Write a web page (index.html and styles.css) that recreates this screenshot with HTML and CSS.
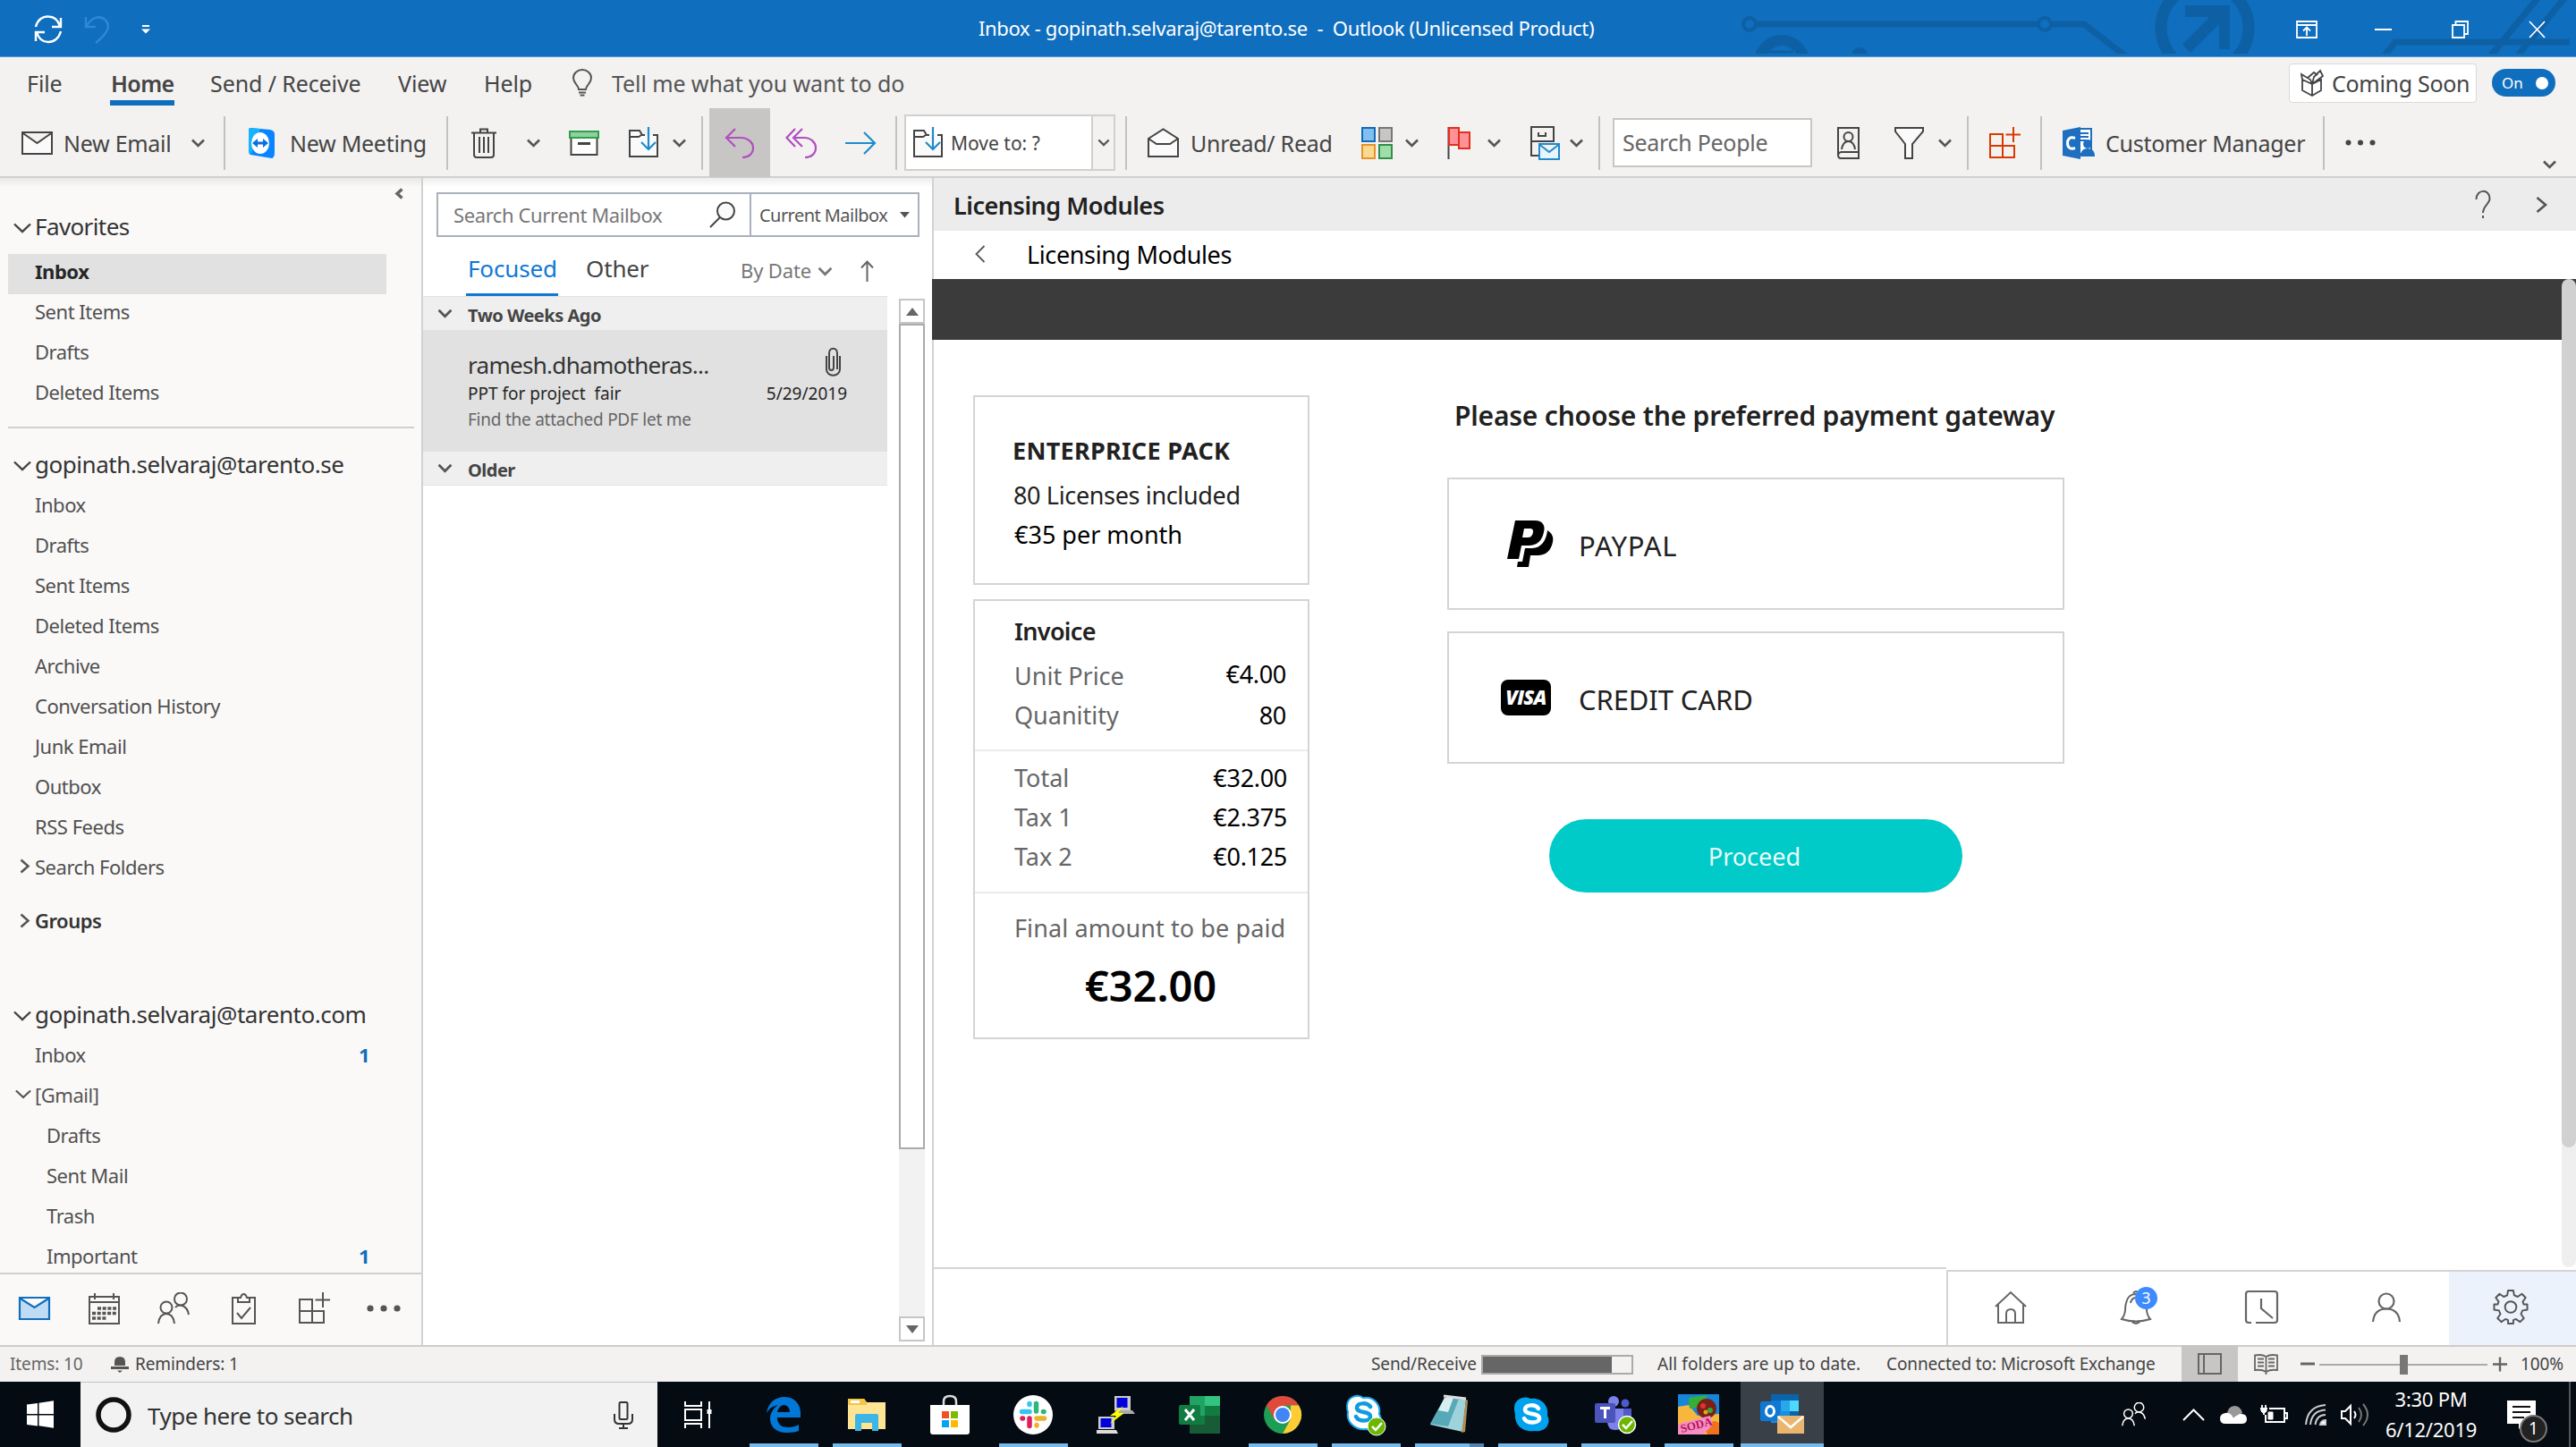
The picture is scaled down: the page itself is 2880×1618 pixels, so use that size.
FILE: index.html
```html
<!DOCTYPE html>
<html lang="en">
<head>
<meta charset="utf-8">
<title>Inbox - Outlook</title>
<link rel="stylesheet" href="styles.css">
</head>
<body>
<svg class="defs" width="0" height="0">
  <symbol id="chev" viewBox="0 0 16 10"><path d="M1.500 1.500 8 8l6.500-6.500" fill="none" stroke="currentColor" stroke-width="2.600"/></symbol>
  <symbol id="caret" viewBox="0 0 20 12"><path d="M1 1.500 10 10l9-8.500" fill="none" stroke="currentColor" stroke-width="2.400"/></symbol>
  <symbol id="moveto" viewBox="0 0 35 36"><path d="M2 4h11l3 5h17v24H2z" fill="#fafafa"/><path d="M19 9h-3l-3-5H2v29h31V9h-5M2 11h10l3-2" fill="none" stroke="#444" stroke-width="2"/><path d="M23 0v25M15 17l8 8 8-8" fill="none" stroke="#1e8bcd" stroke-width="2.200"/></symbol>
  <symbol id="addin" viewBox="0 0 36 36"><path d="M2 8h14v26H2zM2 21h27v13H2M16 21v13M28 0v17M19.500 8.500H36" fill="none" stroke="currentColor" stroke-width="2"/></symbol>
  <symbol id="people" viewBox="0 0 36 36"><g fill="none" stroke="currentColor" stroke-width="2"><circle cx="10" cy="17" r="6.500"/><path d="M1 35c1-8 5-11 9-11s8 3 9 11"/><circle cx="26" cy="7.500" r="7"/><path d="M20 17c3-4 13-4 15 8"/></g></symbol>
</svg>

<header class="titlebar">
  <svg class="circuit" width="980" height="60" viewBox="1900 0 980 60" fill="none" stroke="#0e60a4">
    <circle cx="1956" cy="27" r="7" stroke-width="4"/><path d="M1964 27h314" stroke-width="7"/><circle cx="2286" cy="27" r="7" stroke-width="4"/><path d="M2294 27h36l48 37" stroke-width="7"/>
    <circle cx="1992" cy="70" r="25" stroke-width="12"/><path d="M1975 58h30" stroke-width="3"/><path d="M2070 62a9 9 0 0 1 18 0z" fill="#0e60a4" stroke="none"/><path d="M2088 61h170" stroke-width="2"/>
    <circle cx="2465" cy="31" r="49" stroke-width="13"/><path d="M2443 6h50v49h-12V27l-32 32-9-9 30-31h-27z" fill="#0e60a4" stroke="none"/>
    <path d="M2666 62l12-15h195" stroke-width="7"/><path d="M2785 62l52-64M2815 62l52-64" stroke-width="7"/>
  </svg>
  <svg width="32" height="32" viewBox="0 0 32 32" fill="none" stroke="#fff" stroke-width="2.400"><path d="M2 13C4 5 10 1 16 1.500c6 0 11 4 13 11M30 3v10H20M30 18c-2 8-8 12-14 12-6 0-11-4-13-11M2 29V19h10"/></svg>
  <svg width="30" height="32" viewBox="0 0 30 32" fill="none" stroke="#2f87d8" stroke-width="2.400"><path d="M2 2v11h11M2 13C8 3 16 0 22 4c8 6 7 14-9 27"/></svg>
  <svg width="10" height="10" viewBox="0 0 10 10" fill="#fff"><path d="M1 0h8v2H1zM0 4.500h10L5 9.500z"/></svg>
  <h1>Inbox - gopinath.selvaraj@tarento.se&nbsp; -&nbsp; Outlook (Unlicensed Product)</h1>
  <svg width="24" height="20" viewBox="0 0 24 20" fill="none" stroke="#fff" stroke-width="1.800"><path d="M1 1h22v18H1zM1 5h22M12 17V8M8 11.500l4-4 4 4"/></svg>
  <svg width="19" height="20" viewBox="0 0 19 20"><path d="M0 10h19" stroke="#fff" stroke-width="2"/></svg>
  <svg width="19" height="20" viewBox="0 0 19 20" fill="none" stroke="#fff" stroke-width="1.800"><path d="M1 5h13v14H1zM4.500 5V1H18v14h-4"/></svg>
  <svg width="19" height="20" viewBox="0 0 19 20"><path d="M1 1l17 18M18 1 1 19" stroke="#fff" stroke-width="1.800"/></svg>
</header>

<section class="ribbon">
  <nav class="tabs">
    <span>File</span><span class="tab-on">Home</span><span>Send / Receive</span><span>View</span><span>Help</span>
    <svg width="24" height="31" viewBox="0 0 24 31" fill="none" stroke="#555" stroke-width="2"><path d="M8 23c0-5-6-6-6-13a10 9 0 0 1 20 0c0 7-6 8-6 13zM8 26.500h8M9.500 29.500h5"/></svg>
    <span class="tell">Tell me what you want to do</span>
    <span class="soon"><svg width="26" height="30" viewBox="0 0 26 30" fill="none" stroke="#444" stroke-width="1.800"><path d="M2 11l11 5 10-5v12l-10 6-11-6zM13 16v13M2 11 1 5l10 6 2 5 2-8 7-7 3 6-12 9M8 9l7-6 4 3"/></svg>Coming Soon</span>
    <span class="toggle">On<i></i></span>
  </nav>
  <div class="toolbar">
    <svg width="35" height="26" viewBox="0 0 35 26" fill="#fafafa" stroke="#444" stroke-width="2"><path d="M1 1h33v24H1zM1 1.500 17.500 13 34 1.500"/></svg>
    <span>New Email</span>
    <svg class="ch" width="17" height="10"><use href="#chev"/></svg>
    <i class="sep"></i>
    <svg width="32" height="36" viewBox="0 0 32 36"><path d="M3 1 25 3q5 1 5 5v20q0 6-3 7L3 31q-2-1-2-4V4q0-3 2-3z" fill="#0a84ff"/><path d="M3 1 14 2 4 30q-3-1-3-4V4q0-3 2-3z" fill="#17b3ff"/><ellipse cx="14" cy="18" rx="10" ry="12" fill="#fff"/><path d="M5 18l6-5v3.500h6V13l6 5-6 5v-3.500h-6V23z" fill="#0a6fe0"/></svg>
    <span>New Meeting</span>
    <i class="sep"></i>
    <svg width="28" height="34" viewBox="0 0 28 34" fill="none" stroke="#444" stroke-width="2"><path d="M0 5.500h28M10 5V1.500h8V5M3 6v24q0 3 3 3h16q3 0 3-3V6M9 10v18M14 10v18M19 10v18"/></svg>
    <svg class="ch" width="17" height="10"><use href="#chev"/></svg>
    <svg width="34" height="28" viewBox="0 0 34 28"><path d="M2.500 8h29v19h-29z" fill="#fff" stroke="#444" stroke-width="2"/><path d="M1 1h32v7H1z" fill="#8fd19c" stroke="#2f9e4f" stroke-width="2"/><path d="M10 14.500h14" stroke="#444" stroke-width="3"/></svg>
    <svg width="35" height="36"><use href="#moveto"/></svg>
    <svg class="ch" width="17" height="10"><use href="#chev"/></svg>
    <i class="sep"></i>
    <span class="reply"><svg width="34" height="34" viewBox="0 0 34 34" fill="none" stroke="#b04fc0" stroke-width="2.200"><path d="M12 1 2 11l10 10M2 11h16c9 0 14 6 14 11 0 7-5 11-12 11"/></svg></span>
    <svg width="35" height="34" viewBox="0 0 35 34" fill="none" stroke="#b04fc0" stroke-width="2.200"><path d="M11 1 1.500 11 11 21M19 1 9 11l10 10M9 11h12c8 0 13 6 13 11 0 7-5 11-12 11"/></svg>
    <svg width="35" height="26" viewBox="0 0 35 26" fill="none" stroke="#1e8bcd" stroke-width="2.200"><path d="M0 13h33M21 1l12 12-12 12"/></svg>
    <i class="sep"></i>
    <span class="movebox"><svg width="35" height="36"><use href="#moveto"/></svg><b>Move to: ?</b><i><svg class="ch" width="14" height="9"><use href="#chev"/></svg></i></span>
    <i class="sep"></i>
    <svg width="35" height="34" viewBox="0 0 35 34" fill="#fafafa" stroke="#444" stroke-width="2"><path d="M1 12 17.500 1.500 34 12v20H1z"/><path d="M1 12l9 6h15l9-6" fill="none"/></svg>
    <span>Unread/ Read</span>
    <svg width="35" height="36" viewBox="0 0 35 36" stroke-width="2"><path d="M1 1h14v15H1z" fill="#83beec" stroke="#0f6cbd"/><path d="M20 1h14v15H20z" fill="#c8c6c4" stroke="#797775"/><path d="M1 20h14v15H1z" fill="#f8db8f" stroke="#e8912d"/><path d="M20 20h14v15H20z" fill="#a1ddaa" stroke="#309048"/></svg>
    <svg class="ch" width="17" height="10"><use href="#chev"/></svg>
    <svg width="27" height="36" viewBox="0 0 27 36"><path d="M1.500 0v36" stroke="#444" stroke-width="2"/><path d="M2 1h11v5h12v18H13v-4H2z" fill="#ff9199" stroke="#e0301e" stroke-width="2"/><path d="M13 6v14" stroke="#e0301e" stroke-width="2"/></svg>
    <svg class="ch" width="17" height="10"><use href="#chev"/></svg>
    <svg width="34" height="38" viewBox="0 0 34 38" fill="none" stroke="#444" stroke-width="2"><path d="M10 33H2V1h25v17M2 17h25M10 7v4h8V7"/><path d="M11 20h22v17H11zM11 20.500 22 29l11-8.500" fill="#e8f4fd" stroke="#1e8bcd"/></svg>
    <svg class="ch" width="17" height="10"><use href="#chev"/></svg>
    <i class="sep"></i>
    <span class="findbox">Search People</span>
    <svg width="27" height="36" viewBox="0 0 27 36" fill="none" stroke="#444" stroke-width="2"><path d="M2 1h23v34H5q-3 0-3-4zM2 31q1-3 4-3h19"/><circle cx="13.500" cy="11" r="5"/><path d="M6 25c1-6 4-9 7.500-9s6.500 3 7.500 9"/></svg>
    <svg width="33" height="36" viewBox="0 0 33 36" fill="#fafafa" stroke="#444" stroke-width="2"><path d="M1 1h31v4L20 19v16h-8V19L1 5z"/></svg>
    <svg class="ch" width="17" height="10"><use href="#chev"/></svg>
    <i class="sep"></i>
    <svg class="orange" width="36" height="36"><use href="#addin"/></svg>
    <i class="sep"></i>
    <svg width="36" height="36" viewBox="0 0 36 36"><path d="M18 2h14v28H18z" fill="#fff" stroke="#1e6fc0" stroke-width="2"/><path d="M20 7h9M20 11h9M20 15h6" stroke="#1e6fc0" stroke-width="2"/><path d="M0 4 20 0v36L0 32z" fill="#1e6fc0"/><path d="M14 12.500c-6-2-8.500 1-8.500 5.500s2.500 7.500 8.500 5.500" fill="none" stroke="#fff" stroke-width="3"/><circle cx="28" cy="19" r="5" fill="#1e6fc0"/><path d="M20 33c0-6 3-9 8-9s8 3 8 9z" fill="#1e6fc0"/></svg>
    <span>Customer Manager</span>
    <i class="sep"></i>
    <svg width="34" height="8" viewBox="0 0 34 8" fill="#444"><circle cx="3.500" cy="3.500" r="3"/><circle cx="17" cy="3.500" r="3"/><circle cx="30.500" cy="3.500" r="3"/></svg>
    <svg class="ch fold" width="17" height="10"><use href="#chev"/></svg>
  </div>
</section>

<main>
  <aside class="nav">
    <svg class="collapse" width="10" height="13" viewBox="0 0 10 13"><path d="M8.500 1.500 3 6.500l5.500 5" fill="none" stroke="#666" stroke-width="3.500"/></svg>
    <div class="tree">
      <div class="head fav"><svg width="20" height="12"><use href="#caret"/></svg>Favorites</div>
      <div class="row on">Inbox</div><div class="row">Sent Items</div><div class="row">Drafts</div><div class="row">Deleted Items</div>
      <hr>
      <div class="head"><svg width="20" height="12"><use href="#caret"/></svg>gopinath.selvaraj@tarento.se</div>
      <div class="row">Inbox</div><div class="row">Drafts</div><div class="row">Sent Items</div><div class="row">Deleted Items</div><div class="row">Archive</div><div class="row">Conversation History</div><div class="row">Junk Email</div><div class="row">Outbox</div><div class="row">RSS Feeds</div>
      <div class="row exp"><svg width="12" height="17" viewBox="0 0 12 17"><path d="M1.500 1.500 9.500 8.500l-8 7" fill="none" stroke="#555" stroke-width="2.500"/></svg>Search Folders</div>
      <div class="row exp groups"><svg width="12" height="17" viewBox="0 0 12 17"><path d="M1.500 1.500 9.500 8.500l-8 7" fill="none" stroke="#555" stroke-width="2.500"/></svg>Groups</div>
      <div class="head com"><svg width="20" height="12"><use href="#caret"/></svg>gopinath.selvaraj@tarento.com</div>
      <div class="row">Inbox<b>1</b></div>
      <div class="row gm"><svg width="18" height="11"><use href="#caret"/></svg>[Gmail]</div>
      <div class="row sub">Drafts</div><div class="row sub">Sent Mail</div><div class="row sub">Trash</div><div class="row sub">Important<b>1</b></div>
    </div>
    <div class="navbar">
      <svg width="35" height="26" viewBox="0 0 35 26" fill="#c0dcf5" stroke="#106ebe" stroke-width="2.200"><path d="M1 1h33v24H1zM1 1.500 17.500 12 34 1.500"/></svg>
      <svg width="35" height="35" viewBox="0 0 35 35" fill="none" stroke="#555" stroke-width="2"><path d="M1 4h33v30H1zM1 10h33M7 0v7M28 0v7"/><path d="M10 17h21M4 22.500h27M4 28h17" stroke-width="3.500" stroke-dasharray="4 1.700"/></svg>
      <svg class="grey" width="36" height="36"><use href="#people"/></svg>
      <svg width="27" height="35" viewBox="0 0 27 35" fill="none" stroke="#555" stroke-width="2"><path d="M8 5H1v29h25V5h-7M7 10V5h3q1-4 3.500-4T17 5h3v5zM6 22l5 6 10-12"/></svg>
      <svg class="grey" width="36" height="36"><use href="#addin"/></svg>
      <svg width="38" height="8" viewBox="0 0 38 8" fill="#555"><circle cx="4" cy="4" r="3.600"/><circle cx="19" cy="4" r="3.600"/><circle cx="34" cy="4" r="3.600"/></svg>
    </div>
  </aside>

  <section class="list">
    <div class="mailsearch">
      <span class="q">Search Current Mailbox</span>
      <svg width="30" height="30" viewBox="0 0 30 30" fill="#fafafa" stroke="#444" stroke-width="2"><circle cx="18.500" cy="11" r="9.500"/><path d="M12 18 1 29"/></svg>
      <span class="scope">Current Mailbox<svg width="11" height="7" viewBox="0 0 11 7"><path d="M0 0h11L5.500 6.500z" fill="#555"/></svg></span>
    </div>
    <div class="pivot">
      <span class="focused">Focused</span><span class="other">Other</span><span class="by">By Date</span>
      <svg class="ch" width="17" height="11"><use href="#chev"/></svg>
      <svg width="15" height="24" viewBox="0 0 15 24" fill="none" stroke="#666" stroke-width="2"><path d="M7.500 24V2M1 8.500 7.500 1.500 14 8.500"/></svg>
    </div>
    <div class="scroller">
      <div class="mails">
        <div class="group"><svg class="ch" width="17" height="11"><use href="#chev"/></svg>Two Weeks Ago</div>
        <article>
          <div class="from"><span>ramesh.dhamotheras...</span><svg width="18" height="32" viewBox="0 0 18 32" fill="none" stroke="#444" stroke-width="2"><path d="M1 9v15c0 9 15 9 15 0V9M13 24V6c0-7-9-7-9 0v16c0 4 5 4 5 0V9"/></svg></div>
          <div class="subj"><span>PPT for project&nbsp; fair</span><span>5/29/2019</span></div>
          <div class="prev">Find the attached PDF let me</div>
        </article>
        <div class="group last"><svg class="ch" width="17" height="11"><use href="#chev"/></svg>Older</div>
      </div>
      <div class="bar">
        <span class="btn"><svg width="14" height="9" viewBox="0 0 14 9"><path d="M7 0 14 9H0z" fill="#666"/></svg></span>
        <span class="thumb"></span>
        <span class="btn end"><svg width="14" height="9" viewBox="0 0 14 9"><path d="M0 0h14L7 9z" fill="#666"/></svg></span>
      </div>
    </div>
  </section>

  <section class="pane">
    <div class="phead"><h2>Licensing Modules</h2>
      <svg width="18" height="31" viewBox="0 0 18 31" fill="none" stroke="#555" stroke-width="2"><path d="M1.500 10c0-12 15-12 15-1 0 6-7.500 8-7.500 16M9 28v3"/></svg>
      <svg width="14" height="18" viewBox="0 0 14 18"><path d="M1.500 1 11 9l-9.500 8" fill="none" stroke="#555" stroke-width="2.600"/></svg>
    </div>
    <div class="crumb"><svg width="12" height="20" viewBox="0 0 12 20"><path d="M10.500 1 1.500 10l9 9" fill="none" stroke="#555" stroke-width="1.800"/></svg><span>Licensing Modules</span></div>
    <div class="view">
      <div class="content">
        <div class="dark"></div>
        <div class="cols">
          <div class="left">
            <div class="card pack"><h3>ENTERPRICE PACK</h3><p class="l1">80 Licenses included</p><p class="l2">€35 per month</p></div>
            <div class="card invoice">
              <div class="s1"><h4>Invoice</h4><p class="up"><span>Unit Price</span><b>€4.00</b></p><p class="qt"><span>Quanitity</span><b>80</b></p></div>
              <div class="s2"><p><span>Total</span><b>€32.00</b></p><p><span>Tax 1</span><b>€2.375</b></p><p><span>Tax 2</span><b>€0.125</b></p></div>
              <div class="s3"><p><span>Final amount to be paid</span></p><strong>€32.00</strong></div>
            </div>
          </div>
          <div class="right">
            <h3>Please choose the preferred payment gateway</h3>
            <div class="card pay"><svg width="56" height="54" viewBox="0 0 56 54"><path d="M15 1h22c9 0 12 6 10 13-2 10-8 15-17 15h-8l-3 15H6z"/><path d="M25 10h6c4 0 4 2 4 4-1 5-3 6-7 6h-5z" fill="#fff"/><path d="M51 12c6 4 7 8 6 13-2 10-8 15-17 15h-8l-2 13H17l1-6h5l3-15h8c10 0 16-9 17-20z"/></svg><span class="wide">PAYPAL</span></div>
            <div class="card pay"><span class="visa">VISA</span><span>CREDIT CARD</span></div>
            <button>Proceed</button>
          </div>
        </div>
      </div>
      <div class="vbar"><span></span></div>
    </div>
    <div class="pfoot">
      <div class="blank"></div>
      <div class="apps">
        <span><svg width="36" height="37" viewBox="0 0 36 37" fill="none" stroke="#666" stroke-width="2"><path d="M1 18 18 2l17 16M4 16v20h28V16M13 36V26q0-5 5-5t5 5v10"/></svg></span>
        <span class="bell"><svg width="34" height="38" viewBox="0 0 34 38" fill="none" stroke="#666" stroke-width="2"><path d="M1 32c6-7 3-12 5-18C7 8 11 4 17 4s10 4 11 10c2 6-1 11 5 18q-16 5-32 0zM12 34q5 6 10 0M14 3q3-4 6 0M11 14q1-5 5-6"/></svg><i>3</i></span>
        <span><svg width="37" height="37" viewBox="0 0 37 37" fill="none" stroke="#666" stroke-width="2.200"><path d="M7 36H4q-3 0-3-3V4q0-3 3-3h29q3 0 3 3v29q0 3-3 3H12M18 9v11l13 11"/></svg></span>
        <span><svg width="32" height="33" viewBox="0 0 32 33" fill="none" stroke="#666" stroke-width="2.200"><circle cx="16" cy="10" r="8.500"/><path d="M1 33C2 23 8 18.500 16 18.500S30 23 31 33"/></svg></span>
        <span class="gear"><svg width="40" height="39" viewBox="-20 -20 40 40" fill="none" stroke="#555" stroke-width="2" stroke-linejoin="round"><path d="M-3-19h6l1 5.500 4 1.700 4.800-3.300 4.300 4.300-3.300 4.800 1.700 4 3.500 0v6l-5.500 1-1.700 4 3.300 4.800-4.300 4.300L8-15.200l0 0" stroke="none"/><path d="M-3-19H3L4-13.500 8-11.800 12.800-15.100 17.100-10.800 13.800-6 15-3 19-3V3L13.500 4 11.800 8 15.100 12.800 10.800 17.100 6 13.800 3 15 3 19H-3L-3 15-6 13.800-10.800 17.100-15.100 12.800-11.800 8-13.500 4-19 3V-3L-15-3-13.800-6-17.100-10.800-12.800-15.100-8-11.800-4-13.500Z"/><circle r="6.500"/></svg></span>
      </div>
    </div>
  </section>
</main>

<div class="status">
  <span class="dim">Items: 10</span>
  <svg width="20" height="20" viewBox="0 0 20 20" fill="#555"><path d="M4 11V7q0-6 6-6t6 6v4zM0 12h20v3H0zM7 16.500h6L10 19z"/></svg>
  <span>Reminders: 1</span>
  <span>Send/Receive</span>
  <span class="progress"><i></i></span>
  <span class="uptodate">All folders are up to date.</span>
  <span>Connected to: Microsoft Exchange</span>
  <span class="layout"><svg width="27" height="24" viewBox="0 0 27 24" fill="none" stroke="#666" stroke-width="2"><path d="M1 1h25v22H1zM7 1v22"/></svg></span>
  <svg width="27" height="23" viewBox="0 0 27 23" fill="none" stroke="#666" stroke-width="1.800"><path d="M13.500 3Q9 0 1 1.500V18q8-1 12.500 2Q18 17 26 18V1.500Q18 0 13.500 3v20M4 5.500h7M4 9.500h7M4 13.500h7M16 5.500h7M16 9.500h7M16 13.500h7"/></svg>
  <svg width="17" height="20" viewBox="0 0 17 20"><path d="M0 9h16" stroke="#666" stroke-width="3"/></svg>
  <span class="zoom"><i></i></span>
  <svg width="16" height="20" viewBox="0 0 16 20"><path d="M0 9.500h16M8 1.500v16" stroke="#666" stroke-width="2.400"/></svg>
  <span>100%</span>
</div>

<footer class="taskbar">
  <span><svg width="30" height="31" viewBox="0 0 30 31" fill="#fff"><path d="M0 4.500 12 3v12H0zM13.500 2.700 30 .3V15H13.500zM0 16.500h12v12L0 27zM13.500 16.500H30v14.300l-16.500-2.500z"/></svg></span>
  <div class="find">
    <svg width="40" height="42" viewBox="0 0 40 42"><circle cx="20" cy="21" r="17" fill="none" stroke="#111" stroke-width="5.500"/></svg>
    <span>Type here to search</span>
    <svg width="22" height="31" viewBox="0 0 22 31" fill="none" stroke="#333" stroke-width="2"><rect x="6.500" y="1" width="9" height="19" rx="1.500"/><path d="M1 14v6q0 5 5 5h10q5 0 5-5v-6M11 25v5M6 30h10"/></svg>
  </div>
  <span class="tv"><svg width="31" height="30" viewBox="0 0 31 30" fill="none" stroke="#fff" stroke-width="2"><path d="M1 0v5h18V0M1 9h18v12H1zM1 30v-5h18v5M28 0v30"/><path d="M28 9v5" stroke-width="5"/></svg></span>
  <span class="app run"><svg width="38" height="40" viewBox="0 0 38 40"><path d="M0 18C2 6 10 0 20 0c12 0 18 9 18 18v5H12c0 8 5 11 12 11 5 0 9-1 12-3v7c-3 1-8 2-13 2C10 40 4 33 4 24c0-6 4-12 9-15C7 10 3 13 0 18zm12-1h14c0-5-3-8-7-8-4 1-6 4-7 8z" fill="#0078d7"/></svg></span>
  <span class="app run"><svg width="42" height="36" viewBox="0 0 42 36"><path d="M0 0h18l3 4h21v30H0z" fill="#ffe493"/><path d="M0 0h18l3 4v3H0z" fill="#f5c644"/><path d="M3 2h10v3H3z" fill="#fff"/><path d="M8 36V19q0-2 2-2h22q2 0 2 2v17h-7v-9H15v9z" fill="#3db5e6"/></svg></span>
  <span class="app"><svg width="44" height="44" viewBox="0 0 44 44"><path d="M15 12V7q0-6 7-6t7 6v5" fill="none" stroke="#ddd" stroke-width="2.500"/><path d="M0 11h44v30q0 3-3 3H3q-3 0-3-3z" fill="#fff"/><path d="M13 18h8v8h-8z" fill="#f25022"/><path d="M23 18h8v8h-8z" fill="#7fba00"/><path d="M13 28h8v8h-8z" fill="#00a4ef"/><path d="M23 28h8v8h-8z" fill="#ffb900"/></svg></span>
  <span class="app run"><svg width="44" height="44" viewBox="0 0 44 44" fill="none" stroke-width="5.500" stroke-linecap="round"><circle cx="22" cy="22" r="22" fill="#fff"/><path d="M18 18.500H9.500M18 9.500v1" stroke="#36c5f0"/><path d="M25.500 18V9.500M34 18.500h-.5" stroke="#2eb67d"/><path d="M26 26h8.500M26 34v-.5" stroke="#ecb22e"/><path d="M18 26v8.500M10 26h.5" stroke="#e01e5a"/></svg></span>
  <span class="app"><svg width="44" height="44" viewBox="0 0 44 44"><path d="M20 1h18v16H20z" fill="#ccc"/><path d="M22.500 3h12v11h-12z" fill="#00d"/><path d="M20 17h20l3 4H22z" fill="#aaa"/><path d="M2 24h18v14H2z" fill="#ccc"/><path d="M4.500 26h12v10h-12z" fill="#00d"/><path d="M0 39h22l2 4H0z" fill="#ddd"/><path d="M30 12 15 23h7l-7 9 16-12h-7z" fill="#ff0"/></svg></span>
  <span class="app"><svg width="46" height="42" viewBox="0 0 46 42"><path d="M12 0h17v42H12z" fill="#185c37"/><path d="M12 0h17v11H12zM12 11h17v11H12z" fill="#21a366"/><path d="M29 0h17v11H29z" fill="#33c481"/><path d="M29 11h17v11H29z" fill="#107c41"/><path d="M12 22h17v10H12z" fill="#107c41"/><path d="M29 22h17v20H29z" fill="#185c37"/><rect y="10" width="24" height="22" rx="2" fill="#107c41"/><path d="M7 15l10 12M17 15 7 27" stroke="#fff" stroke-width="3"/></svg></span>
  <span class="app run"><svg width="42" height="42" viewBox="0 0 42 42"><circle cx="21" cy="21" r="21" fill="#1e9e54"/><path d="M2.800 10.500A21 21 0 0 1 39.200 10.500H21L12 26z" fill="#df4a3c"/><path d="M39.200 10.500A21 21 0 0 1 21 42l9-16V10.500z" fill="#fc3"/><circle cx="21" cy="21" r="10" fill="#fff"/><circle cx="21" cy="21" r="8" fill="#4285f4"/></svg></span>
  <span class="app run"><svg width="46" height="46" viewBox="0 0 46 46"><path d="M2 13C2 3 14-1 20 4c12-2 20 8 18 18 5 9-3 20-14 17C10 41 1 30 3 20c-1-2-1-5-1-7z" fill="#fff" stroke="#12a5e8" stroke-width="2"/><path d="M28 14c-3-5-15-5-15 1 0 7 15 3 15 10 0 6-13 6-16 0" fill="none" stroke="#0f9be0" stroke-width="4.500" stroke-linecap="round"/><circle cx="35" cy="36" r="10" fill="#6bb700" stroke="#fff"/><path d="M30 36l4 4 7-8" fill="none" stroke="#fff" stroke-width="2.500"/></svg></span>
  <span class="app run more"><svg width="43" height="42" viewBox="0 0 43 42"><path d="M16 2 40 4 36 40 0 32z" fill="#9fd3dc"/><path d="M16 2 32 3 20 34 0 31z" fill="#57a9b8"/><path d="M16 2 26 2 20 18 9 16z" fill="#d7eef1"/><path d="M40 4l2 1-3 35-4 1z" fill="#b28e55"/><path d="M15 0 40 3" stroke="#ddd" stroke-width="3"/></svg></span>
  <span class="app run"><svg width="44" height="42" viewBox="0 0 44 42"><path d="M2 13C2 3 14-1 20 3c12-2 21 8 19 19 5 9-3 19-14 17C10 41 2 31 3 20c-1-2-1-5-1-7z" fill="#00a2ed"/><path d="M29 14c-3-5-15-5-15 1 0 7 16 3 16 10 0 6-14 6-17 0" fill="none" stroke="#fff" stroke-width="4.500" stroke-linecap="round"/></svg></span>
  <span class="app run"><svg width="46" height="42" viewBox="0 0 46 42"><circle cx="21" cy="6" r="6" fill="#7b83eb"/><circle cx="34" cy="8" r="4.500" fill="#5059c9"/><path d="M14 14h18v14q0 10-9 10t-9-10z" fill="#7b83eb"/><path d="M32 14h9v12q0 8-9 6z" fill="#5059c9"/><rect y="8" width="23" height="22" rx="2" fill="#4b53bc"/><path d="M6 13.500h11M11.500 13.500V25" stroke="#fff" stroke-width="3"/><circle cx="36" cy="32" r="9.500" fill="#6bb700" stroke="#fff" stroke-width="1.500"/><path d="M31 32l4 4 7-8" fill="none" stroke="#fff" stroke-width="2.500"/></svg></span>
  <span class="app run"><svg class="candy" width="46" height="45" viewBox="0 0 46 45"><path d="M0 0h46v45H0z" fill="#1686d9"/><path d="M0 14 12 12l10 12L46 22v23H0z" fill="#f6b73c"/><path d="M12 4l20-3-3 13-16 2z" fill="#36b034"/><circle cx="32" cy="16" r="11" fill="#7a2018"/><circle cx="28" cy="13" r="3" fill="#d33"/><circle cx="36" cy="18" r="3" fill="#3a3"/><circle cx="31" cy="20" r="2.500" fill="#e8a020"/><circle cx="40" cy="39" r="9" fill="#f2711c"/><path d="M0 33 36 24l3 10L28 45H0z" fill="#f78fc4"/><text x="4" y="43" class="soda" transform="rotate(-14 4 43)">SODA</text></svg></span>
  <span class="app active"><svg width="49" height="46" viewBox="0 0 49 46"><path d="M12 2h31v24H12z" fill="#0a64ad"/><path d="M12 9h16v12H12z" fill="#0f78d4"/><path d="M23 9h10v12H23z" fill="#28a8ea"/><path d="M33 9h10v12H33z" fill="#50d9ff"/><path d="M12 21h21v13H12z" fill="#1490df"/><rect y="10" width="22" height="22" rx="2" fill="#0f78d4"/><ellipse cx="11" cy="21" rx="4.500" ry="5.500" fill="none" stroke="#fff" stroke-width="3"/><path d="M19 26h30v20H19z" fill="#eab56f"/><path d="M20 27l14 12 14-12" fill="none" stroke="#fff" stroke-width="2.500"/></svg></span>
  <span></span>
  <svg class="white" width="27" height="29" viewBox="0 0 36 36"><use href="#people" width="36" height="36"/></svg>
  <svg width="25" height="14" viewBox="0 0 25 14"><path d="M1 13 12.500 1.500 24 13" fill="none" stroke="#fff" stroke-width="2"/></svg>
  <svg width="30" height="20" viewBox="0 0 30 20"><path d="M8 10Q8 1 16 0q7 0 9 8l-8 5z" fill="#999"/><path d="M6 20q-6 0-6-6 0-5 6-6 5-1 9 5l7-4q8-1 8 6 0 5-6 5z" fill="#fff"/></svg>
  <svg width="31" height="21" viewBox="0 0 31 21" fill="none" stroke="#fff" stroke-width="2"><path d="M10 4h17v15H6v-8M27 9h3v6h-3"/><path d="M2 0v4M6 0v4M0 4h8M4 4v7" stroke-width="1.800"/><path d="M1 4h6v3q-3 4-6 0zM9 8h5v8H9z" fill="#fff" stroke-width="1"/></svg>
  <svg width="24" height="23" viewBox="0 0 24 23" fill="none" stroke="#ccc" stroke-width="2"><path d="M1 23C2 10 9 2 23 1M6 23C7 13 13 7 23 6.500M11.500 23c1-7 5-11 11.500-11"/><path d="M17 23q1-5 6-5v5z" fill="#fff"/></svg>
  <svg width="32" height="28" viewBox="0 0 32 28" fill="none" stroke="#fff" stroke-width="2"><path d="M1 10h4l6-6v20l-6-6H1zM15 10q3 4 0 8"/><path d="M20 6q6 8 0 16M25 2q10 12 0 24" stroke="#777"/></svg>
  <div class="clock"><span>3:30 PM</span><span>6/12/2019</span></div>
  <span></span>
  <span class="note"><svg width="32" height="32" viewBox="0 0 32 32"><path d="M0 0h32v26H19l-6 6v-6H0z" fill="#fff"/><path d="M6 7h20M6 13h20M6 19h13" stroke="#111" stroke-width="2"/></svg><i>1</i></span>
  <span class="desk"></span>
</footer>
</body>
</html>
```
FILE: styles.css
```css
* { box-sizing: border-box; margin: 0; padding: 0; }
body {
  width: 2880px; height: 1618px; overflow: hidden;
  display: flex; flex-direction: column;
  font: 25px "Noto Sans", "Open Sans", sans-serif; color: #444; background: #fff;
}
svg { display: block; flex: none; overflow: visible; }
i, b { font-style: normal; }
.defs { position: absolute; }
.ch { color: #555; }

/* Title bar */
.titlebar {
  position: relative; flex: none; height: 64px; background: #106ebe; border-bottom: 1px solid #5a9ad2;
  display: grid; align-items: center; padding: 3px 0 0 38px;
  grid-template-columns: 56px 64px 936px 1473px 88px 86px 86px 30px;
}
.titlebar > svg:not(.circuit) { z-index: 1; }
.circuit { position: absolute; right: 0; top: 0; }
.titlebar .circuit { overflow: hidden; }
.titlebar h1 { padding-bottom: 4px; font-size: 22px; font-weight: 400; color: #fff; letter-spacing: -.36px; white-space: nowrap; }

/* Ribbon */
.ribbon { flex: none; height: 135px; background: #f3f2f1; border-bottom: 2px solid #d2d0ce; }
.tabs {
  height: 57px; display: grid; align-items: center; padding-left: 30px; white-space: nowrap;
  grid-template-columns: 91px 114px 210px 96px 98px 45px 1875px 227px 71px;
}
.tabs > span { padding-bottom: 0; letter-spacing: -.1px; }
.tabs .tab-on { justify-self: start; align-self: stretch; font-weight: 600; letter-spacing: -.6px; padding: 12px 1px 0; margin-left: 2px; width: 72px; border-bottom: 6px solid #106ebe; line-height: 34px; margin-bottom: 3px; }
.tabs .tell { color: #555; }
.tabs .soon { display: flex; align-items: center; gap: 9px; width: 210px; height: 44px; padding-left: 12px; background: #fff; border: 1px solid #dcdad8; border-radius: 4px; letter-spacing: -.3px; }
.toggle { display: flex; align-items: center; justify-content: space-between; height: 31px; border-radius: 16px; background: #106ebe; color: #fff; font-size: 17px; padding: 0 8px 0 11px !important; }
.toggle i { width: 14px; height: 14px; border-radius: 50%; background: #fff; }
.toolbar {
  height: 76px; display: grid; align-items: center; padding-left: 24px; white-space: nowrap; letter-spacing: -.28px;
  grid-template-columns: 47px 142px 37px 27px 47px 175px 28px 61px 48px 66px 49px 33px 9px 85px 67px 56px 10px 247px 25px 48px 191px 48px 48px 44px 48px 44px 33px 16px 250px 65px 48px 33px 24px 58px 25px 48px 243px 25px 220px 35px;
}
.sep { width: 2px; height: 60px; background: #c3c1bf; }
.reply { width: 68px; height: 77px; background: #c8c6c4; display: grid; place-items: center; }
.movebox { width: 236px; height: 63px; display: flex; align-items: center; background: #fff; border: 2px solid #d2d0ce; padding-left: 7px; font-size: 21px; letter-spacing: 0; }
.movebox b { font-weight: 400; margin-left: 8px; flex: 1; }
.movebox i { width: 25px; height: 59px; border-left: 2px solid #d2d0ce; background: #f3f2f1; display: grid; place-items: center; }
.findbox { width: 223px; height: 55px; line-height: 51px; background: #fff; border: 2px solid #c8c6c4; padding-left: 9px; color: #666; }
.orange { color: #d83b01; }
.grey { color: #555; }
.fold { margin-top: 48px; }

main { flex: none; height: 1305px; display: flex; }

/* Folder pane */
.nav { position: relative; width: 473px; display: flex; flex-direction: column; background: linear-gradient(#e8e7e6, #faf9f8 10px); border-right: 2px solid #d2d2d2; }
.collapse { position: absolute; left: 441px; top: 11px; }
.tree { flex: 1; overflow: hidden; padding-top: 34px; }
.head, .row { display: flex; align-items: center; height: 45px; padding-bottom: 6px; padding-left: 39px; white-space: nowrap; }
.head { font-size: 26px; letter-spacing: -.45px; color: #333; padding-left: 15px; padding-bottom: 5px; gap: 4px; }
.head svg { color: #444; margin-top: 4px; }
.fav { margin-bottom: 5.5px; letter-spacing: -.6px; }
.row { font-size: 22px; letter-spacing: -.48px; color: #505050; }
.row b { margin-left: auto; margin-right: 58px; color: #106ebe; }
.on { margin: 0 39px 0 9px; padding-left: 30px; background: #e1e1e1; font-weight: 700; color: #262626; }
.tree hr { border: 0; height: 2px; background: #d2d0ce; margin: 13.5px 8px 20px 9px; }
.exp { padding-left: 22px; gap: 5px; }
.groups { margin-top: 15.5px; font-weight: 600; color: #333; }
.com { margin-top: 59.5px; }
.gm { padding-left: 17px; gap: 4px; color: #555; }
.sub { padding-left: 52px; }
.navbar { height: 81px; border-top: 2px solid #d2d0ce; display: grid; align-items: center; grid-template-columns: 78px 77px 83px 74px 77px 61px; padding: 0 0 3px 21px; }

/* Message list */
.list { width: 569px; display: flex; flex-direction: column; background: linear-gradient(#ededed, #fff 10px); }
.mailsearch { margin: 16px 0 0 15px; width: 540px; height: 50px; border: 2px solid #a9b1bd; display: flex; align-items: center; font-size: 22px; letter-spacing: -.4px; color: #777; background: #fff; white-space: nowrap; }
.q { width: 303px; padding-left: 17px; }
.scope { flex: 1; margin-left: 15px; height: 46px; border-left: 2px solid #a9b1bd; display: flex; align-items: center; justify-content: space-between; padding: 0 9px 0 9px; font-size: 20px; letter-spacing: -.55px; color: #555; }
.pivot { height: 66px; display: grid; align-items: center; grid-template-columns: 133px 173px 87px 48px 20px; padding-left: 48px; font-size: 26px; letter-spacing: -.15px; }
.focused { color: #0f78d4; width: 103px; height: 66px; line-height: 71px; padding-left: 2px; border-bottom: 3px solid #0f78d4; }
.pivot .other { padding: 4px 0 0 1px; }
.pivot .by { font-size: 22px; color: #777; padding: 8px 0 0 1px; }
.pivot svg { margin-top: 10px; color: #777; }
.scroller { flex: 1; display: flex; }
.mails { width: 519px; margin-right: 13px; }
.group { height: 38px; display: flex; align-items: center; gap: 17px; padding: 3px 0 0 16px; background: #efefef; border-top: 1px solid #e1e1e1; font-size: 20px; font-weight: 700; letter-spacing: -.5px; }
.group svg { margin-bottom: 3px; }
.group.last { border-top: 0; border-bottom: 1px solid #e1e1e1; }
.mails article { height: 136px; background: #e1e1e1; padding: 23px 45px 0 50px; color: #262626; white-space: nowrap; font-size: 19px; }
.from, .subj { display: flex; justify-content: space-between; }
.from { height: 33px; line-height: 33px; font-size: 26px; letter-spacing: -.7px; color: #333; }
.from svg { margin: -3px 6px 0 0; }
.subj { height: 31px; line-height: 31px; }
.prev { line-height: 26px; color: #666; letter-spacing: -.25px; }
.bar { width: 29px; margin: 3px 0 4px; background: #f2f2f2; display: flex; flex-direction: column; }
.btn { height: 28px; border: 2px solid #c6c6c6; background: #fff; display: grid; place-items: center; }
.thumb { height: 923px; border: 2px solid #ababab; background: #fff; }
.end { margin-top: auto; }

/* Reading pane */
.pane { flex: 1; display: flex; flex-direction: column; color: #212121; }
.phead, .crumb, .cols, .blank { border-left: 2px solid #d2d2d2; }
.phead { height: 59px; background: #ececec; display: grid; align-items: center; grid-template-columns: 1701px 68px 40px; padding-left: 22px; }
.phead h2 { font-size: 27px; font-weight: 600; letter-spacing: -.48px; padding-top: 1px; }
.crumb { height: 54px; display: flex; align-items: center; padding: 0 0 2px 46px; gap: 46px; font-size: 27px; letter-spacing: -.38px; color: #000; }
.view { flex: 1; display: flex; }
.content { flex: 1; display: flex; flex-direction: column; }
.dark { height: 68px; background: #3b3b3b; }
.cols { flex: 1; display: flex; gap: 154px; padding: 62px 0 0 44px; }
.card { border: 2px solid #d4d4d4; background: #fff; }
.left { width: 376px; font-size: 27px; white-space: nowrap; }
.pack { height: 212px; padding: 34px 0 0 42px; }
.pack h3 { font-size: 27px; line-height: 51px; letter-spacing: .3px; }
.l1 { line-height: 49px; letter-spacing: -.35px; padding-left: 1px; }
.l2 { line-height: 40px; color: #000; padding-left: 2px; }
.invoice { height: 492px; margin-top: 16px; }
.invoice > div { padding: 0 23px 0 44px; }
.invoice p { display: flex; justify-content: space-between; color: #666; line-height: 44px; }
.invoice p b { font-weight: 400; color: #000; letter-spacing: -.3px; }
.invoice .s1 { padding-top: 10px; height: 168px; border-bottom: 2px solid #ebebeb; }
.invoice h4 { font-size: 27px; font-weight: 600; line-height: 48px; letter-spacing: -.7px; }
.invoice .up { line-height: 51px; }
.up b { margin: -2px 1px 0 0; }
.invoice .qt { line-height: 37px; }
.qt b { margin-right: 1px; }
.invoice .s2 { padding-top: 8px; height: 159px; border-bottom: 2px solid #ebebeb; }
.invoice .s3 { padding-top: 17px; }
.s3 span { letter-spacing: .1px; }
.s3 strong { display: block; font-size: 47px; font-weight: 600; line-height: 84px; text-align: center; color: #000; }
.right { width: 690px; }
.right h3 { font-size: 30px; font-weight: 600; line-height: 45px; letter-spacing: -.2px; padding-left: 8px; white-space: nowrap; }
.pay { height: 148px; margin-top: 24px; display: flex; align-items: center; gap: 31px; padding-left: 58px; font-size: 31px; letter-spacing: -.1px; }
.right h3 + .pay { margin-top: 47px; }
.pay > svg { margin-left: 1px; margin-right: -1px; }
.pay span { padding-top: 3px; }
.pay .wide { letter-spacing: .7px; }
.pay .visa { width: 56px; height: 40px; padding: 0; border-radius: 8px; background: #000; color: #fff; font: italic 800 22px/38px "Open Sans", sans-serif; letter-spacing: -.7px; text-align: center; }
button { display: block; width: 462px; height: 82px; margin: 62px 0 0 114px; padding-right: 3px; border: 0; border-radius: 41px; background: #00cbc8; color: #eafbfb; font: 27px "Noto Sans", sans-serif; }
.vbar { width: 16px; background: linear-gradient(#3b3b3b 10px, #efefef 10px); border-radius: 0 0 8px 8px; }
.vbar span { display: block; height: 971px; background: #d1d1d1; border-radius: 8px; }
.pfoot { height: 87px; display: flex; align-items: flex-end; }
.blank { width: 1134px; height: 87px; border-top: 2px solid #d4d4d4; }
.apps { flex: 1; height: 84px; border-top: 2px solid #d4d4d4; border-left: 2px solid #d4d4d4; display: grid; grid-template-columns: 140px 140px 140px 140px 1fr; }
.apps > span { display: grid; place-items: center; padding-bottom: 3px; }
.apps .bell { position: relative; }
.bell i { position: absolute; left: 69px; top: 17px; width: 25px; height: 25px; border-radius: 50%; background: #3d8bff; color: #fff; font-size: 18px; line-height: 24px; text-align: center; }
.apps .gear { background: #ebf2fc; padding-right: 4px; }

/* Status bar */
.status { flex: none; height: 41px; background: #f3f2f1; border-top: 2px solid #cfcdcb; display: grid; align-items: center; padding-left: 11px; font-size: 19px; white-space: nowrap; grid-template-columns: 113px 27px 1382px 123px 197px 256px 330px 81px 52px 21px 194px 31px 62px; }
.status span { letter-spacing: -.12px; padding-bottom: 2px; }
.status .dim { color: #666; }
.status .uptodate { letter-spacing: .1px; }
.status .progress { width: 170px; height: 22px; padding: 0; border: 2px solid #aaa; background: #f3f2f1; }
.progress i { display: block; width: 144px; height: 18px; background: #666; }
.status .layout { width: 63px; height: 41px; margin-top: -2px; padding: 0; background: #c8c6c4; display: grid; place-items: center; }
.status .zoom { width: 188px; height: 22px; padding: 0; display: grid; justify-content: center; background: linear-gradient(#aaa, #aaa) center / 100% 2px no-repeat; }
.zoom i { width: 9px; height: 22px; background: #777; }

/* Windows taskbar */
.taskbar { flex: none; height: 73px; background: #050b12; display: grid; align-items: center; grid-template-columns: 90px 645px 95px repeat(13, 93px) 333px 68px 42px 45px 50px 40px 46px 110px 30px 69px 8px; color: #fff; }
.taskbar > span { display: grid; place-items: center; height: 73px; padding-right: 1px; }
.taskbar > .tv { padding-right: 4px; }
.find { height: 73px; display: flex; align-items: center; background: #f2f2f2; border-top: 1px solid #c4c4c4; padding: 0 27px 0 17px; color: #333; font-size: 26px; letter-spacing: -.52px; }
.find span { flex: 1; margin-left: 18px; padding-top: 1px; }
.app { position: relative; }
.run::after { content: ""; position: absolute; left: 8px; bottom: 0; width: 77px; height: 4px; background: #76b9ed; }
.more::after { background: linear-gradient(90deg, #76b9ed 61px, #5484ad 61px); }
.active { background: #3a4047; border-bottom: 4px solid #76b9ed; }
.candy { overflow: hidden; }
.soda { font: 700 13px "Liberation Serif", serif; fill: #b3145a; }
.white { color: #fff; }
.clock { display: flex; flex-direction: column; text-align: center; font-size: 22px; line-height: 34px; letter-spacing: -.25px; padding-bottom: 1px; }
.taskbar .note { position: relative; justify-items: start; }
.note i { position: absolute; left: 14px; top: 37px; width: 31px; height: 31px; border-radius: 50%; background: #222; border: 2px solid #777; font-size: 19px; line-height: 26px; text-align: center; }
.desk { border-left: 2px solid #555; }
```
